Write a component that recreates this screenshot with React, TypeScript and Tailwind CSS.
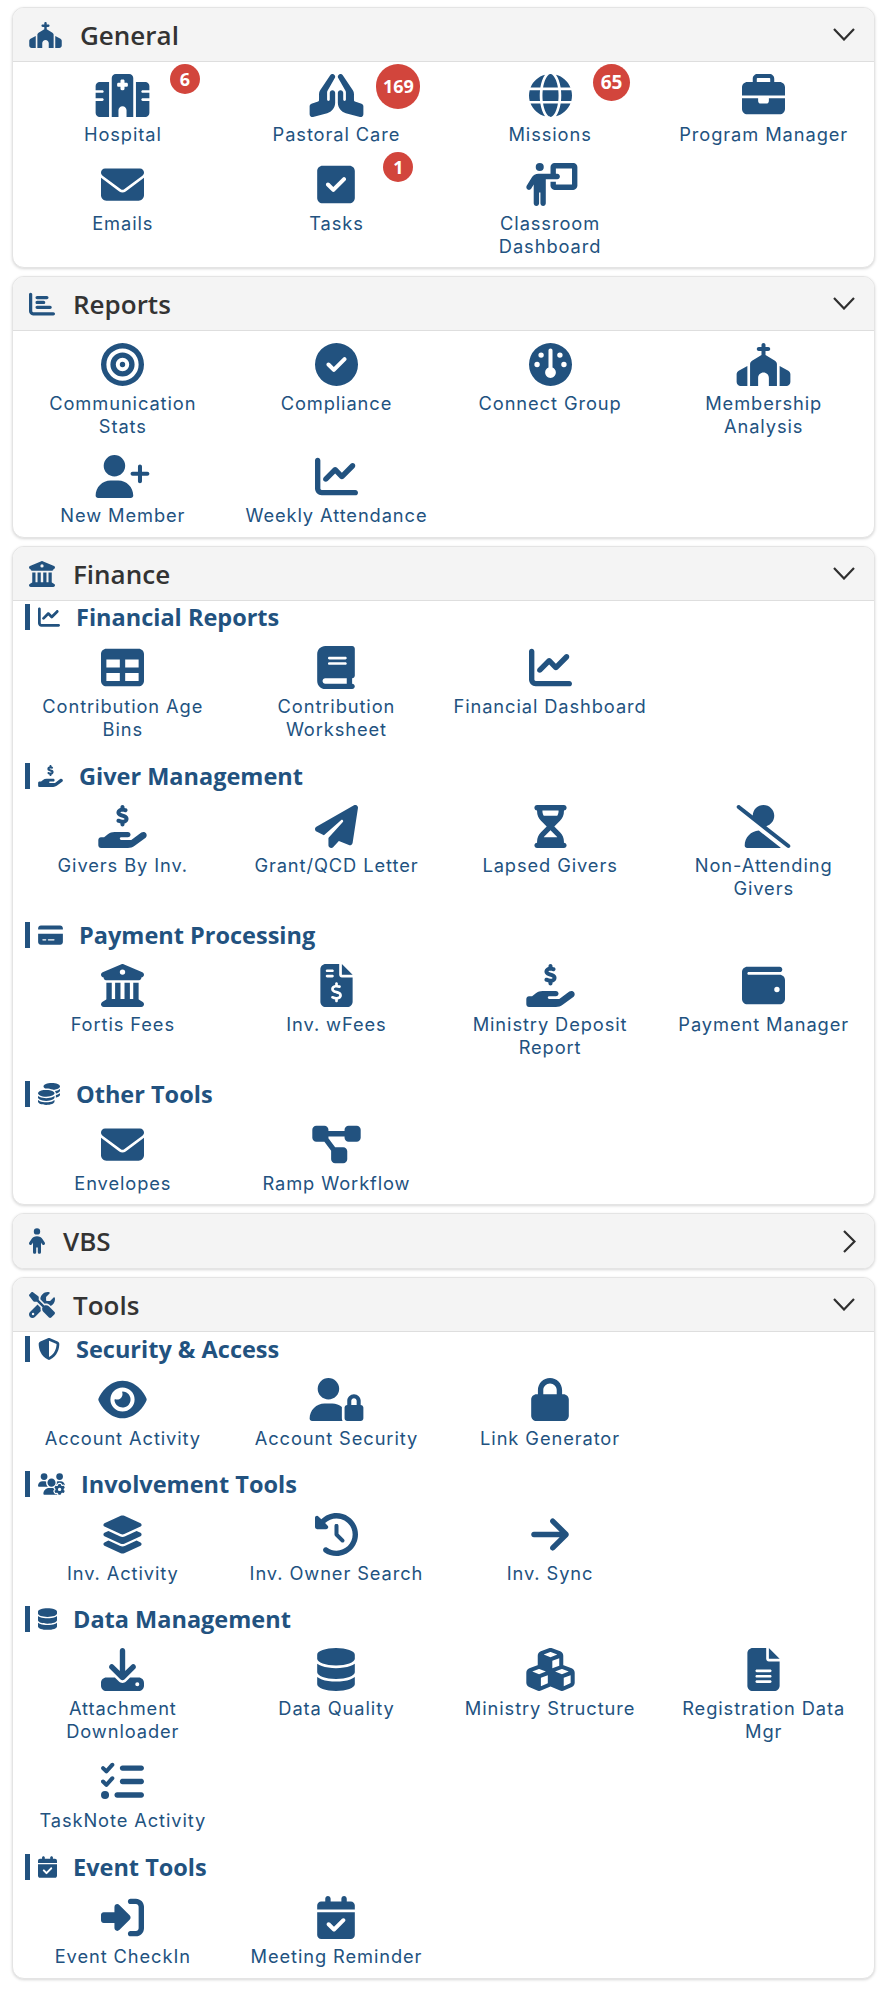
import type { ComponentType, ReactNode } from "react";
import {
  FaChurch, FaHospital, FaHandsPraying, FaGlobe, FaBriefcase, FaEnvelope, FaSquareCheck, FaPersonChalkboard,
  FaChartBar, FaBullseye, FaCircleCheck, FaGauge, FaUserPlus, FaChartLine, FaBuildingColumns, FaTable,
  FaBook, FaHandHoldingDollar, FaPaperPlane, FaHourglassHalf, FaUserSlash, FaCreditCard, FaFileInvoiceDollar,
  FaWallet, FaCoins, FaDiagramProject, FaChild, FaScrewdriverWrench, FaShieldHalved, FaEye, FaUserLock, FaLock,
  FaUsersGear, FaLayerGroup, FaClockRotateLeft, FaArrowRight, FaDatabase, FaDownload, FaCubes, FaFileLines,
  FaListCheck, FaCalendarCheck, FaRightToBracket,
} from "react-icons/fa6";

type Ic = ComponentType<{ className?: string }>;
type Item = { icon: Ic; w?: string; label: ReactNode; badge?: ReactNode };

const W640 = "w-[55px]";
const W576 = "w-[49px]";
const W448 = "w-[38px]";
const W384 = "w-[33px]";

function Tile({ icon: Icon, w = "w-[43px]", label, badge }: Item) {
  return (
    <div className="relative flex flex-col items-center text-center">
      <Icon className={`h-[43px] ${w}`} />
      <div className="mt-[6px] w-[205px] text-[18.3px] leading-[23px] tracking-[0.9px]">{label}</div>
      {badge}
    </div>
  );
}

function Grid({ items }: { items: Item[] }) {
  return (
    <div className="grid grid-cols-4 gap-y-[17px]">
      {items.map((it, i) => (
        <Tile key={i} {...it} />
      ))}
    </div>
  );
}

function Sub({ icon: Icon, w = "w-[22px]", title, items, tight = false }: { icon: Ic; w?: string; title: string; items: Item[]; tight?: boolean }) {
  return (
    <div className={tight ? "mb-[21px]" : "mb-[22px] last:mb-0"}>
      <div className="ml-[9px] flex h-[26px] items-center gap-[16px] border-l-[5px] border-[#22527f] pl-[8px]">
        <Icon className={`h-[22px] ${w}`} />
        <span className="font-['Open_Sans'] text-[23.5px] font-bold leading-[26px]">{title}</span>
      </div>
      <div className="mt-[16px]">
        <Grid items={items} />
      </div>
    </div>
  );
}

function Card({ icon: Icon, w = "w-[26px]", title, open = true, children }: { icon: Ic; w?: string; title: string; open?: boolean; children?: ReactNode }) {
  return (
    <section className="overflow-hidden rounded-[12px] border border-[#e4e4e4] bg-white shadow-[0_1px_3px_rgba(0,0,0,0.16)]">
      <header className={`flex h-[54px] items-center gap-[18px] bg-[#f4f4f4] pl-[16px] pr-[19px] ${open ? "border-b border-[#dedede]" : ""}`}>
        <Icon className={`h-[26px] ${w}`} />
        <span className="font-['Open_Sans'] text-[26px] font-semibold leading-[30px] text-[#333333]">{title}</span>
        {open ? (
          <svg viewBox="0 0 22 13" className="ml-auto h-[13px] w-[22px]" fill="none" stroke="#2f2f2f" strokeWidth="2.2">
            <path d="M1 1l10 10.5L21 1" />
          </svg>
        ) : (
          <svg viewBox="0 0 13 23" className="ml-auto mr-[-1px] h-[23px] w-[13px]" fill="none" stroke="#2f2f2f" strokeWidth="2.2">
            <path d="M1 1l10.5 10.5L1 22" />
          </svg>
        )}
      </header>
      {children}
    </section>
  );
}

function Badge({ text, className }: { text: string; className: string }) {
  return (
    <span className={`absolute flex items-center justify-center rounded-full bg-[#d2453c] font-['Open_Sans'] font-bold text-white ${className}`}>
      {text}
    </span>
  );
}

const general: Item[] = [
  { icon: FaHospital, w: W640, label: "Hospital", badge: <Badge text="6" className="left-[calc(50%+47px)] top-[-10px] h-[30px] w-[30px] text-[18px]" /> },
  { icon: FaHandsPraying, w: W640, label: "Pastoral Care", badge: <Badge text="169" className="left-[calc(50%+40px)] top-[-10px] h-[45px] w-[44px] text-[18px]" /> },
  { icon: FaGlobe, label: "Missions", badge: <Badge text="65" className="left-[calc(50%+43px)] top-[-10px] h-[37px] w-[37px] text-[19px]" /> },
  { icon: FaBriefcase, label: "Program Manager" },
  { icon: FaEnvelope, label: "Emails" },
  { icon: FaSquareCheck, w: W448, label: "Tasks", badge: <Badge text="1" className="left-[calc(50%+47px)] top-[-11px] h-[30px] w-[30px] text-[18px]" /> },
  { icon: FaPersonChalkboard, w: W640, label: <>Classroom<br />Dashboard</> },
];

const reports: Item[] = [
  { icon: FaBullseye, label: <>Communication<br />Stats</> },
  { icon: FaCircleCheck, label: "Compliance" },
  { icon: FaGauge, label: "Connect Group" },
  { icon: FaChurch, w: W640, label: <>Membership<br />Analysis</> },
  { icon: FaUserPlus, w: W640, label: "New Member" },
  { icon: FaChartLine, label: "Weekly Attendance" },
];

export default function App() {
  return (
    <div className="flex flex-col gap-[8px] pb-[14px] pl-[12px] pr-[9.5px] pt-[7px] font-['Inter',sans-serif] text-[#22527f]">
      <Card icon={FaChurch} w="w-[33px]" title="General">
        <div className="px-[3px] pb-[9px] pt-[12px]">
          <Grid items={general} />
        </div>
      </Card>
      <Card icon={FaChartBar} title="Reports">
        <div className="px-[3px] pb-[10px] pt-[12px]">
          <Grid items={reports} />
        </div>
      </Card>
      <Card icon={FaBuildingColumns} title="Finance">
        <div className="px-[3px] pb-[9px] pt-[3px]">
          <Sub icon={FaChartLine} title="Financial Reports" items={[
            { icon: FaTable, label: <>Contribution Age<br />Bins</> },
            { icon: FaBook, w: W448, label: <>Contribution<br />Worksheet</> },
            { icon: FaChartLine, label: "Financial Dashboard" },
          ]} />
          <Sub icon={FaHandHoldingDollar} w="w-[25px]" title="Giver Management" items={[
            { icon: FaHandHoldingDollar, w: W576, label: "Givers By Inv." },
            { icon: FaPaperPlane, label: "Grant/QCD Letter" },
            { icon: FaHourglassHalf, w: W384, label: "Lapsed Givers" },
            { icon: FaUserSlash, w: W640, label: <>Non-Attending<br />Givers</> },
          ]} />
          <Sub icon={FaCreditCard} w="w-[25px]" title="Payment Processing" items={[
            { icon: FaBuildingColumns, label: "Fortis Fees" },
            { icon: FaFileInvoiceDollar, w: W384, label: "Inv. wFees" },
            { icon: FaHandHoldingDollar, w: W576, label: <>Ministry Deposit<br />Report</> },
            { icon: FaWallet, label: "Payment Manager" },
          ]} />
          <Sub icon={FaCoins} title="Other Tools" items={[
            { icon: FaEnvelope, label: "Envelopes" },
            { icon: FaDiagramProject, w: W576, label: "Ramp Workflow" },
          ]} />
        </div>
      </Card>
      <Card icon={FaChild} w="w-[16px]" title="VBS" open={false} />
      <Card icon={FaScrewdriverWrench} title="Tools">
        <div className="px-[3px] pb-[10px] pt-[4px]">
          <Sub tight icon={FaShieldHalved} title="Security & Access" items={[
            { icon: FaEye, w: W576, label: "Account Activity" },
            { icon: FaUserLock, w: W640, label: "Account Security" },
            { icon: FaLock, w: W448, label: "Link Generator" },
          ]} />
          <Sub tight icon={FaUsersGear} w="w-[27px]" title="Involvement Tools" items={[
            { icon: FaLayerGroup, label: "Inv. Activity" },
            { icon: FaClockRotateLeft, label: "Inv. Owner Search" },
            { icon: FaArrowRight, w: W448, label: "Inv. Sync" },
          ]} />
          <Sub icon={FaDatabase} w="w-[19px]" title="Data Management" items={[
            { icon: FaDownload, label: <>Attachment<br />Downloader</> },
            { icon: FaDatabase, w: W448, label: "Data Quality" },
            { icon: FaCubes, w: W576, label: "Ministry Structure" },
            { icon: FaFileLines, w: W384, label: <>Registration Data<br />Mgr</> },
            { icon: FaListCheck, label: "TaskNote Activity" },
          ]} />
          <Sub icon={FaCalendarCheck} w="w-[19px]" title="Event Tools" items={[
            { icon: FaRightToBracket, label: "Event CheckIn" },
            { icon: FaCalendarCheck, w: W448, label: "Meeting Reminder" },
          ]} />
        </div>
      </Card>
    </div>
  );
}
